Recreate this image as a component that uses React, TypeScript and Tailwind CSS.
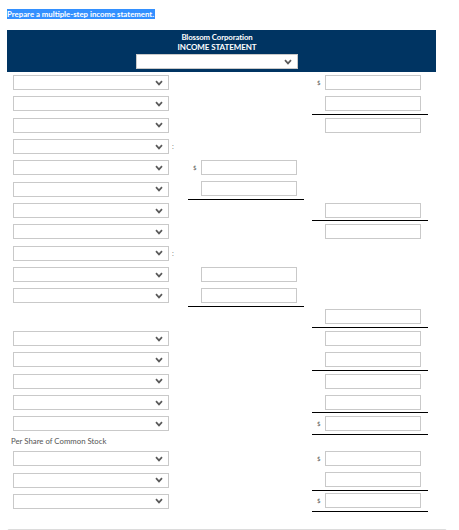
import React from 'react';

type Cell = { input?: boolean; dollar?: boolean; line?: boolean };

interface RowDef {
  select?: boolean;
  colon?: boolean;
  mid?: Cell;
  right?: Cell;
}

const rows: RowDef[] = [
  { select: true, right: { input: true, dollar: true } },
  { select: true, right: { input: true, line: true } },
  { select: true, right: { input: true } },
  { select: true, colon: true },
  { select: true, mid: { input: true, dollar: true } },
  { select: true, mid: { input: true, line: true } },
  { select: true, right: { input: true, line: true } },
  { select: true, right: { input: true } },
  { select: true, colon: true },
  { select: true, mid: { input: true } },
  { select: true, mid: { input: true, line: true } },
  { right: { input: true, line: true } },
  { select: true, right: { input: true } },
  { select: true, right: { input: true, line: true } },
  { select: true, right: { input: true } },
  { select: true, right: { input: true, line: true } },
  { select: true, right: { input: true, dollar: true, line: true } },
];

const perShareRows: RowDef[] = [
  { select: true, right: { input: true, dollar: true } },
  { select: true, right: { input: true, line: true } },
  { select: true, right: { input: true, dollar: true, line: true } },
];

const Chevron = () => (
  <svg width="8" height="6" viewBox="0 0 8 6" className="shrink-0">
    <path d="M1 1.2 L4 4.4 L7 1.2" fill="none" stroke="#5a5a5a" strokeWidth="1.7" />
  </svg>
);

const Select = ({ width = 'w-[156px]' }: { width?: string }) => (
  <div className={`${width} h-[15px] bg-white border border-[#c9c9c9] flex items-center justify-end pr-[5px]`}>
    <Chevron />
  </div>
);

const AmountCell = ({ cell }: { cell?: Cell }) => (
  <div className={`h-full flex items-center ${cell?.line ? 'border-b border-black' : ''}`}>
    <span className="w-[13px] pl-[5px] text-[6px] text-[#555]">{cell?.dollar ? '$' : ''}</span>
    {cell?.input && <div className="w-[96px] h-[15px] bg-white border border-[#c9c9c9]" />}
  </div>
);

const Row = ({ row }: { row: RowDef }) => (
  <div className="h-[21.33px] grid grid-cols-[181px_116px_8px_116px]">
    <div className="h-full flex items-center pl-[6px]">
      {row.select && <Select />}
      {row.colon && <span className="ml-[3px] text-[7px] text-[#777]">:</span>}
    </div>
    <AmountCell cell={row.mid} />
    <div />
    <AmountCell cell={row.right} />
  </div>
);

export default function App() {
  return (
    <div className="w-[459px] h-[530px] overflow-hidden bg-white font-['Lato',sans-serif]">
      <div className="px-[7px] pt-[9px]">
        <div className="w-fit h-[10px] leading-[10px] bg-[#3390ff] text-white text-[7.8px] font-bold pr-[1px]">
          Prepare a multiple-step income statement.
        </div>

        <div className="mt-[11px] w-[429px] h-[42px] bg-[#003462] flex flex-col items-center pr-[9px] pt-[2px]">
          <div className="text-white text-[7.8px] font-bold leading-[10px] tracking-[-0.1px]">Blossom Corporation</div>
          <div className="text-white text-[8px] font-bold leading-[10px] tracking-[-0.1px]">INCOME STATEMENT</div>
          <div className="mt-[2px]">
            <Select width="w-[162px]" />
          </div>
        </div>

        <div className="w-[429px]">
          {rows.map((r, i) => (
            <Row key={i} row={r} />
          ))}
          <div className="h-[13.5px] pl-[4px] pt-[1px] text-[7.8px] leading-[10px] text-[#555]">
            Per Share of Common Stock
          </div>
          {perShareRows.map((r, i) => (
            <Row key={i} row={r} />
          ))}
        </div>

        <div className="mt-[17px] w-[440px] h-[20px] border border-[#dcdcdc] rounded-[2px] bg-[#fcfcfc]" />
      </div>
    </div>
  );
}
